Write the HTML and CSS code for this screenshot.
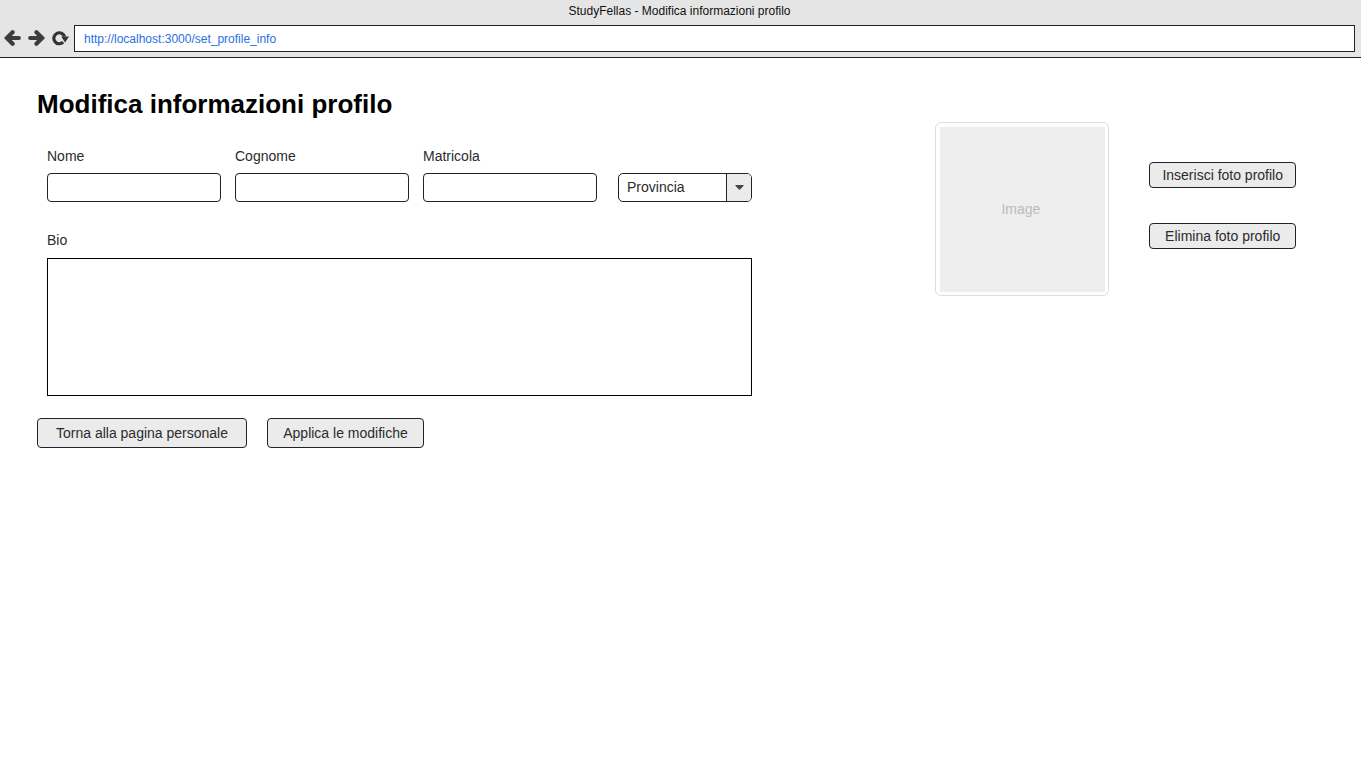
FILE: index.html
```html
<!DOCTYPE html>
<html lang="it">
<head>
<meta charset="utf-8">
<meta name="viewport" content="width=device-width, initial-scale=1">
<title>StudyFellas - Modifica informazioni profilo</title>
<link rel="stylesheet" href="styles.css">
</head>
<body>
<header class="browser">
  <div class="browser-title">StudyFellas - Modifica informazioni profilo</div>
  <div class="browser-bar">
    <div class="browser-nav">
      <button class="nav-button" type="button" aria-label="Indietro">
        <svg width="18" height="18" viewBox="0 0 18 18" fill="none" stroke="#3c3c3c" stroke-width="4.2" stroke-linecap="round"><path d="M4 9H14.8"/><path d="M8.6 3.3L2.9 9L8.6 14.7"/></svg>
      </button>
      <button class="nav-button" type="button" aria-label="Avanti">
        <svg width="18" height="18" viewBox="0 0 18 18" fill="none" stroke="#3c3c3c" stroke-width="4.2" stroke-linecap="round"><path d="M2.2 9H13"/><path d="M8.4 3.3L14.1 9L8.4 14.7"/></svg>
      </button>
      <button class="nav-button" type="button" aria-label="Ricarica">
        <svg width="18" height="18" viewBox="0 0 18 18"><path d="M12.6 7.6A5.5 5.5 0 1 0 11.2 13.2" fill="none" stroke="#333" stroke-width="3.2"/><path d="M9.2 7.4H17L13.1 13.6Z" fill="#333"/></svg>
      </button>
    </div>
    <input class="address" type="url" aria-label="Indirizzo" value="http://localhost:3000/set_profile_info">
  </div>
</header>
<main class="page">
  <form class="profile">
    <h1 class="heading">Modifica informazioni profilo</h1>
    <div class="fields">
      <div class="row">
        <div class="field"><label for="nome">Nome</label><input class="text-input" id="nome" type="text"></div>
        <div class="field"><label for="cognome">Cognome</label><input class="text-input" id="cognome" type="text"></div>
        <div class="field"><label for="matricola">Matricola</label><input class="text-input" id="matricola" type="text"></div>
        <div class="province">
          <select class="select" aria-label="Provincia"><option>Provincia</option></select>
          <span class="select-arrow"><svg width="9" height="5" viewBox="0 0 9 5"><path d="M1 0H8Q9.2 0 8.4 1L5.3 4.3Q4.5 5 3.7 4.3L0.6 1Q-0.2 0 1 0Z" fill="#444"/></svg></span>
        </div>
      </div>
      <div class="bio"><label for="bio">Bio</label><textarea class="bio-input" id="bio"></textarea></div>
    </div>
    <div class="actions">
      <button class="button button-back" type="button">Torna alla pagina personale</button>
      <button class="button button-apply" type="submit">Applica le modifiche</button>
    </div>
  </form>
  <aside class="photo">
    <div class="photo-frame"><div class="photo-image">Image</div></div>
    <div class="photo-actions">
      <button class="button" type="button">Inserisci foto profilo</button>
      <button class="button" type="button">Elimina foto profilo</button>
    </div>
  </aside>
</main>
</body>
</html>
```
FILE: styles.css
```css
* {
  box-sizing: border-box;
}

body {
  margin: 0;
  background: #fff;
  color: #2b2b2b;
  font: 14px/20px "Liberation Sans", Arial, sans-serif;
}

button,
input,
select,
textarea {
  margin: 0;
  color: inherit;
  font: inherit;
}

.browser {
  padding-bottom: 5px;
  border-bottom: 1px solid #222;
  background: #e5e5e5;
}

.browser-title {
  padding: 3px 2px 6px 0;
  color: #111;
  font-size: 12px;
  line-height: 16px;
  text-align: center;
}

.browser-bar {
  display: flex;
  align-items: center;
  gap: 4px;
  padding: 0 6px 0 4px;
}

.browser-nav {
  display: flex;
  gap: 6px;
  padding-bottom: 1px;
}

.nav-button {
  display: flex;
  padding: 0;
  border: 0;
  background: none;
}

.address {
  flex: 1;
  min-width: 0;
  height: 27px;
  padding: 0 9px;
  border: 1px solid #222;
  background: #fff;
  color: #2a6fe3;
  font-size: 12px;
}

.page {
  display: flex;
  justify-content: space-between;
  align-items: flex-start;
  gap: 40px;
  padding: 31px 65px 31px 37px;
}

.profile {
  flex: 0 1 715px;
}

.heading {
  margin: 0 0 27px;
  color: #000;
  font-size: 26px;
  line-height: 30px;
}

.fields {
  padding-left: 10px;
}

.row {
  display: flex;
  align-items: flex-end;
  gap: 14px;
  margin-bottom: 28px;
}

.field {
  display: flex;
  flex: 0 1 174px;
  flex-direction: column;
  gap: 7px;
  min-width: 0;
}

.text-input {
  width: 100%;
  height: 29px;
  padding: 0 8px;
  border: 1px solid #222;
  border-radius: 4px;
  background: #fff;
}

.province {
  position: relative;
  width: 134px;
  margin-left: auto;
}

.select {
  display: block;
  width: 100%;
  height: 29px;
  padding: 0 26px 1px 8px;
  border: 1px solid #222;
  border-radius: 5px;
  background: #fff;
  appearance: none;
}

.select-arrow {
  position: absolute;
  top: 1px;
  right: 1px;
  bottom: 1px;
  display: flex;
  align-items: center;
  justify-content: center;
  width: 25px;
  border-left: 1px solid #222;
  border-radius: 0 4px 4px 0;
  background: #ebebeb;
  pointer-events: none;
}

.bio {
  display: flex;
  flex-direction: column;
  gap: 8px;
}

.bio-input {
  width: 100%;
  height: 138px;
  padding: 8px;
  border: 1px solid #000;
  border-radius: 0;
  background: #fff;
  resize: none;
}

.actions {
  display: flex;
  gap: 20px;
  margin-top: 22px;
}

.button {
  height: 26px;
  padding: 0 12px;
  border: 1px solid #222;
  border-radius: 4px;
  background: #ebebeb;
}

.button-back,
.button-apply {
  height: 30px;
}

.button-back {
  width: 210px;
}

.button-apply {
  width: 157px;
}

.photo {
  display: flex;
  align-items: flex-start;
  gap: 40px;
  margin-top: 33px;
}

.photo-frame {
  width: 174px;
  padding: 4px 3px 3px 4px;
  border: 1px solid #ddd;
  border-radius: 6px;
}

.photo-image {
  display: grid;
  place-items: center;
  aspect-ratio: 1;
  padding: 0 4px 2px 0;
  background: #eee;
  color: #bbb;
}

.photo-actions {
  display: flex;
  flex-direction: column;
  gap: 35px;
  padding-top: 40px;
}
```
